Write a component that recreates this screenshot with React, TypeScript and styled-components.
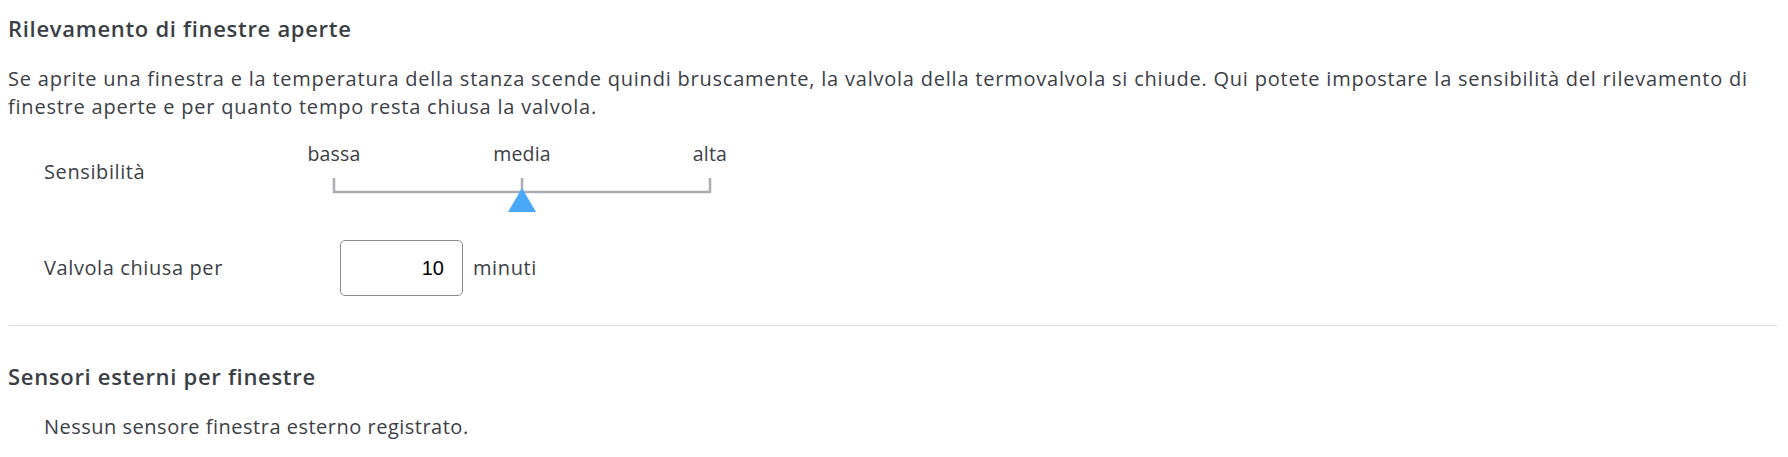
import React from "react";
import styled, { createGlobalStyle } from "styled-components";

const GlobalStyle = createGlobalStyle`
  body {
    margin: 0;
    background: #ffffff;
    color: #3c4047;
    font-family: "Open Sans", "Noto Sans", sans-serif;
  }
`;

const Page = styled.main`
  padding: 13px 11px 0 8px;
`;

const Heading = styled.h2<{ $gap?: number }>`
  margin: ${({ $gap }) => $gap ?? 0}px 0 0;
  font-size: 22px;
  line-height: 30px;
  font-weight: 600;
  letter-spacing: 0.7px;
  color: #3a3e45;
`;

const Text = styled.p`
  margin: 22px 0 0;
  font-size: 20px;
  line-height: 28px;
  letter-spacing: 0.78px;
`;

const Indented = styled(Text)`
  margin: 22px 0 0 36px;
  letter-spacing: 0.5px;
`;

const SettingRow = styled.div<{ $gap: number }>`
  display: flex;
  align-items: ${({ $gap }) => ($gap > 20 ? "center" : "flex-start")};
  margin: ${({ $gap }) => $gap}px 0 0 36px;
`;

const Label = styled.div<{ $width: number; $offset?: number }>`
  flex: none;
  width: ${({ $width }) => $width}px;
  padding-top: ${({ $offset }) => $offset ?? 0}px;
  font-size: 20px;
  line-height: 28px;
  letter-spacing: 0.6px;
`;

const Slider = styled.div`
  display: flex;
  flex-direction: column;
  width: 564px;
`;

const Marks = styled.div`
  display: grid;
  grid-template-columns: repeat(3, 1fr);
  text-align: center;
  font-size: 19.5px;
  line-height: 28px;
  letter-spacing: 0.2px;
`;

const Track = styled.svg`
  display: block;
`;

const NumberBox = styled.input`
  box-sizing: border-box;
  width: 123px;
  height: 56px;
  padding: 0 18px 0 8px;
  border: 1px solid #8c8c8c;
  border-radius: 5px;
  background: #ffffff;
  color: #000000;
  font-family: "Liberation Sans", Arial, sans-serif;
  font-size: 20px;
  text-align: right;
  outline: none;
`;

const Unit = styled.span`
  margin-left: 10px;
  font-size: 20px;
  line-height: 28px;
  letter-spacing: 0.6px;
`;

const Divider = styled.hr`
  margin: 29px 0 0 1px;
  border: 0;
  border-top: 1px solid #d9d9d9;
`;

const levels = ["bassa", "media", "alta"];

function SensitivitySlider({ value }: { value: number }) {
  const ticks = [94, 282, 470];
  const x = ticks[value];
  return (
    <Slider>
      <Marks>
        {levels.map((l) => (
          <span key={l}>{l}</span>
        ))}
      </Marks>
      <Track width={564} height={46} viewBox="0 0 564 46">
        <g stroke="#abadb2" strokeWidth={2.5} fill="none">
          <path d="M94 10 V24 H470 V10" />
          <path d="M282 10 V24" />
        </g>
        <path d={`M${x} 20 L${x + 14} 44 L${x - 14} 44 Z`} fill="#4aa8f8" />
      </Track>
    </Slider>
  );
}

export default function App() {
  return (
    <>
      <GlobalStyle />
      <Page>
        <Heading>Rilevamento di finestre aperte</Heading>
        <Text>
          Se aprite una finestra e la temperatura della stanza scende quindi
          bruscamente, la valvola della termovalvola si chiude. Qui potete
          impostare la sensibilità del rilevamento di finestre aperte e per
          quanto tempo resta chiusa la valvola.
        </Text>
        <SettingRow $gap={19}>
          <Label $width={196} $offset={18}>
            Sensibilità
          </Label>
          <SensitivitySlider value={1} />
        </SettingRow>
        <SettingRow $gap={26}>
          <Label $width={296}>Valvola chiusa per</Label>
          <NumberBox type="text" defaultValue="10" />
          <Unit>minuti</Unit>
        </SettingRow>
        <Divider />
        <Heading $gap={35}>Sensori esterni per finestre</Heading>
        <Indented>Nessun sensore finestra esterno registrato.</Indented>
      </Page>
    </>
  );
}
